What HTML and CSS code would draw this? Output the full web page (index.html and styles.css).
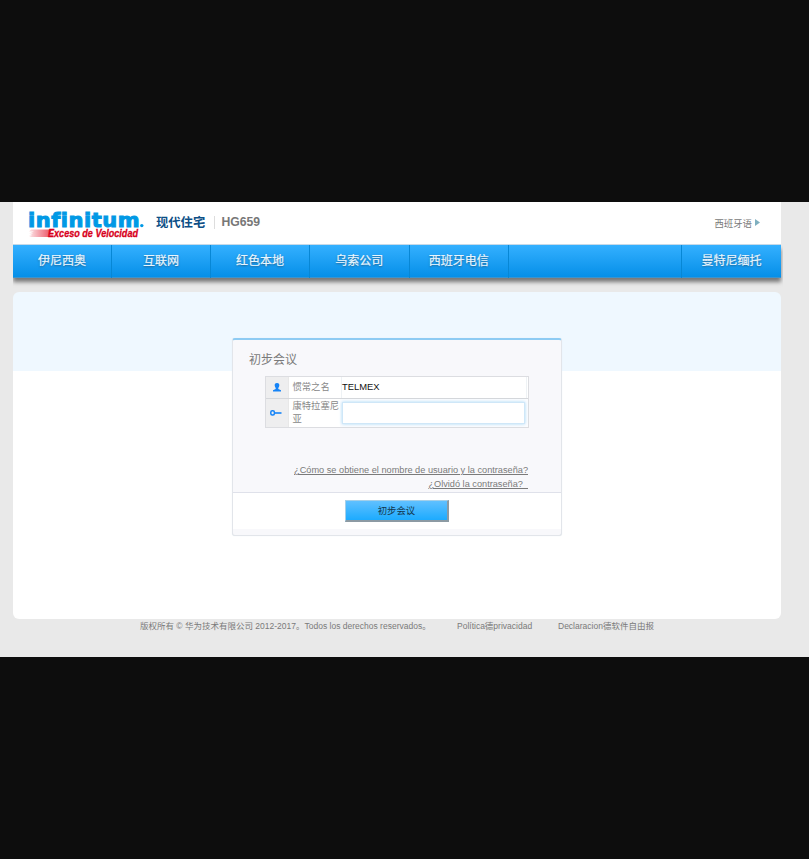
FILE: index.html
```html
<!DOCTYPE html>
<html lang="zh">
<head>
<meta charset="utf-8">
<title>HG659</title>
<link rel="stylesheet" href="styles.css">
</head>
<body>
<main class="screen">
  <div class="page">
    <header class="header">
      <svg class="logo" width="118" height="36" viewBox="0 0 118 36">
        <defs><linearGradient id="trail"><stop offset="0" stop-color="#e2001a" stop-opacity=".1"/><stop offset="1" stop-color="#e2001a" stop-opacity=".7"/></linearGradient></defs>
        <text class="logo-name" x="-1" y="19" textLength="112" lengthAdjust="spacingAndGlyphs">infinitum</text>
        <circle cx="112.8" cy="17.6" r="1.7" fill="#0099e5"/>
        <path d="M2 21.5H23L19 29H0L3 27.5H0L4 25.5H0L5 23.5H0Z" fill="url(#trail)"/>
        <text class="logo-tag" x="19" y="29.3" textLength="90" lengthAdjust="spacingAndGlyphs">Exceso de Velocidad</text>
      </svg>
      <span class="product">现代住宅</span>
      <span class="model">HG659</span>
      <span class="language">西班牙语<svg width="5" height="7" viewBox="0 0 5 7"><path d="M0 0L5 3.5L0 7Z" fill="#7fb0c0"/></svg></span>
    </header>
    <nav class="nav">
      <a>伊尼西奥</a><a>互联网</a><a>红色本地</a><a>乌索公司</a><a>西班牙电信</a><i></i><a>曼特尼缅托</a>
    </nav>
    <section class="content">
      <form class="login">
        <h1>初步会议</h1>
        <div class="fields">
          <div class="row user">
            <span class="icon"><svg width="8" height="9" viewBox="0 0 8 9"><path d="M4 0C5.9 0 6.4 1.2 6.3 2.6C6.2 3.8 5.6 4.5 5.3 5.1V6L8 7.2V8.6H0V7.2L2.7 6V5.1C2.4 4.5 1.8 3.8 1.7 2.6C1.6 1.2 2.1 0 4 0Z" fill="#1684f7"/></svg></span>
            <label>惯常之名</label>
            <span class="value">TELMEX</span>
          </div>
          <div class="row pass">
            <span class="icon"><svg width="12" height="6" viewBox="0 0 12 6"><rect x=".8" y=".8" width="3.6" height="4.2" rx="1.5" fill="none" stroke="#1684f7" stroke-width="1.5"/><path d="M4.5 3H11.5" stroke="#1684f7" stroke-width="1.6"/></svg></span>
            <label>康特拉塞尼亚</label>
            <span class="value"></span>
          </div>
        </div>
        <div class="links">
          <a class="how">¿Cómo se obtiene el nombre de usuario y la contraseña?</a>
          <a>¿Olvidó la contraseña?&nbsp;&nbsp;</a>
        </div>
        <div class="actions"><button type="button">初步会议</button></div>
      </form>
    </section>
    <footer class="footer">
      <span class="copy">版权所有 © 华为技术有限公司 2012-2017。Todos los derechos reservados。</span>
      <span class="privacy">Política德privacidad</span>
      <span>Declaracion德软件自由报</span>
    </footer>
  </div>
</main>
</body>
</html>
```
FILE: styles.css
```css
* { box-sizing: border-box; }
body {
  margin: 0;
  height: 859px;
  padding-top: 202px;
  background: #0d0d0d;
  font-family: "Liberation Sans", "Noto Sans CJK SC", sans-serif;
  color: #7a7a7a;
  overflow: hidden;
}
.screen { height: 455px; background: #e9e9e9; padding: 0 28px 0 13px; }
.page { width: 768px; }
.header {
  height: 43px;
  background: #fff;
  display: flex;
  align-items: flex-start;
  padding: 6px 21px 0 16px;
  border-bottom: 1px solid #c5d9e8;
}
.logo { display: block; flex: none; overflow: visible; }
.logo-name {
  font: bold 20px "DejaVu Sans", sans-serif;
  font-variant-ligatures: none;
  letter-spacing: .5px;
  fill: #0099e5;
  stroke: #0099e5;
  stroke-width: 1px;
}
.logo-tag { font: italic bold 10.2px "Liberation Sans", sans-serif; fill: #d8001c; stroke: #d8001c; stroke-width: .3px; }
.product {
  margin-left: 9px;
  width: 59px;
  height: 13px;
  margin-top: 8px;
  font: bold 12.3px/12px "Noto Sans CJK SC", sans-serif;
  color: #0d4f86;
  white-space: nowrap;
  border-right: 1px solid #ddd;
}
.model { margin: 8px 0 0 6.5px; font-size: 12.2px; font-weight: bold; line-height: 13px; color: #777; }
.language {
  margin: 9px 0 0 auto;
  display: flex;
  align-items: center;
  gap: 3px;
  font-size: 9.4px;
  line-height: 13px;
}
.language svg { margin-top: -2px; }
.nav {
  position: relative;
  height: 33px;
  display: grid;
  grid-template-columns: 99px 99px 99px 99.5px 99.5px 1fr 99px;
  background: linear-gradient(#34b0ff, #058fe8);
  border-bottom: 1px solid #3a94cf;
  box-shadow: 0 4px 4px #777;
  clip-path: inset(0 -2px -12px 0);
}
.nav a, .nav i { border-right: 1px solid #0787d5; }
.nav a {
  text-align: center;
  font-size: 12px;
  line-height: 33px;
  color: #e9f6ff;
  text-shadow: 0 1px 2px #23608b;
  -webkit-text-stroke: .2px #e9f6ff;
}
.nav a:last-child { border: 0; }
.content {
  margin-top: 14px;
  height: 327px;
  padding-top: 46px;
  border-radius: 6px;
  background: linear-gradient(#eff8ff 79px, #fff 79px);
}
.login {
  width: 330px;
  height: 198px;
  margin-left: 219px;
  background: #f8f8fb;
  border: 1px solid #e2e5ea;
  border-top: 2px solid #8dcbf3;
  border-radius: 3px;
  box-shadow: 0 0 1px #dce5ed;
}
.login h1 {
  margin: 11px 0 0 16px;
  font-size: 12px;
  line-height: 18px;
  font-weight: normal;
}
.fields { margin: 7px 0 0 32px; width: 264px; border: 1px solid #dcdde1; background: #fff; }
.row { display: grid; grid-template-columns: 23px 51px 1fr; }
.user { height: 22px; border-bottom: 1px solid #d5d7db; }
.pass { height: 28px; background: #fbfcfe; }
.icon { display: flex; align-items: center; justify-content: center; background: #eeeeef; border-right: 1px solid #e8e8e8; }
.pass .icon { padding-right: 3px; }
.row label { padding-left: 3.5px; font-size: 9.3px; line-height: 21px; color: #888; background: #fff; }
.pass label { line-height: 13.5px; padding-top: .5px; }
.value { font-size: 9.4px; line-height: 20px; color: #111; }
.user .value { margin: 0 1px 0 1px; border: 1px solid #eef2f5; border-width: 0 1px; }
.pass .value {
  margin: 3px 3px 3px 2px;
  background: #fff;
  border: 1px solid #cfe7f8;
  box-shadow: 0 0 3px #a9daf8;
}
.links {
  height: 64px;
  padding: 35px 33px 0 0;
  display: flex;
  flex-direction: column;
  align-items: flex-end;
  font-size: 9.2px;
  line-height: 14px;
}
.links a { text-decoration: underline; white-space: nowrap; }
.actions {
  height: 37px;
  border-top: 1px solid #dfe1ea;
  background: #fff;
  display: flex;
  justify-content: center;
  padding-top: 7px;
}
.actions button {
  width: 104px;
  height: 22px;
  padding: 0;
  font: 9.4px/18px "Liberation Sans", "Noto Sans CJK SC", sans-serif;
  color: #12354c;
  background: linear-gradient(#60c0ff, #1cabff);
  border: 1px solid #8eb2ca;
  border-width: 1px 2px 2px 1px;
  border-color: #a4cfe9 #8c9aa3 #8c9aa3 #a4cfe9;
}
.footer {
  display: flex;
  padding-left: 127px;
  font-size: 8.5px;
  line-height: 14px;
  white-space: nowrap;
}
.copy { width: 317px; }
.privacy { width: 101px; }
```
